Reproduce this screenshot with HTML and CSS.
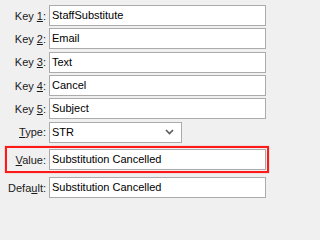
FILE: index.html
```html
<!DOCTYPE html>
<html>
<head>
<meta charset="utf-8">
<link rel="stylesheet" href="styles.css">
</head>
<body>
<div class="form">
  <div class="row"><span class="label">Key <u>1</u>:</span><div class="field">StaffSubstitute</div></div>
  <div class="row"><span class="label">Key <u>2</u>:</span><div class="field">Email</div></div>
  <div class="row"><span class="label">Key <u>3</u>:</span><div class="field">Text</div></div>
  <div class="row"><span class="label">Key <u>4</u>:</span><div class="field">Cancel</div></div>
  <div class="row"><span class="label">Key <u>5</u>:</span><div class="field">Subject</div></div>
  <div class="row"><span class="label"><u>T</u>ype:</span>
    <div class="select"><span>STR</span>
      <svg class="chev" width="9" height="6" viewBox="0 0 9 6"><path d="M1 1 L4.5 4.5 L8 1" fill="none" stroke="#5a5a5a" stroke-width="1.6"/></svg>
    </div>
  </div>
  <div class="highlight">
    <div class="row inner"><span class="label"><u>V</u>alue:</span><div class="field">Substitution Cancelled</div></div>
  </div>
  <div class="row"><span class="label">Defa<u>u</u>lt:</span><div class="field">Substitution Cancelled</div></div>
</div>
</body>
</html>
```

FILE: styles.css
```css
html, body {
  margin: 0;
  padding: 0;
  background: #f0f0f0;
}
body {
  font-family: "Liberation Sans", Arial, sans-serif;
  font-size: 11px;
  color: #000;
}
.form {
  display: flex;
  flex-direction: column;
  padding-top: 5px;
  gap: 2px;
}
.row {
  display: flex;
  align-items: center;
  height: 21px;
  margin-bottom: 0.35px;
}
.label {
  width: 46px;
  padding-right: 3px;
  text-align: right;
  color: #1a1a1a;
  white-space: nowrap;
  flex: none;
}
.label u {
  text-underline-offset: 1px;
}
.field {
  box-sizing: border-box;
  width: 217px;
  height: 21px;
  border: 1px solid #ababab;
  background: #fff;
  padding-left: 2px;
  line-height: 19px;
  white-space: nowrap;
  flex: none;
}
.select {
  box-sizing: border-box;
  width: 133px;
  height: 21px;
  border: 1px solid #ababab;
  background: #fff;
  padding-left: 2px;
  line-height: 19px;
  display: flex;
  justify-content: space-between;
  align-items: center;
  padding-right: 7px;
  flex: none;
}
.highlight {
  margin-top: 1px;
  margin-left: 5px;
  width: 264px;
  box-sizing: border-box;
  border: 2px solid #ff1a1a;
  box-shadow: 0 0 1px #ff8080;
  padding: 1px 0;
  margin-bottom: 2px;
}
.row.inner .label {
  width: 39px;
}
```
